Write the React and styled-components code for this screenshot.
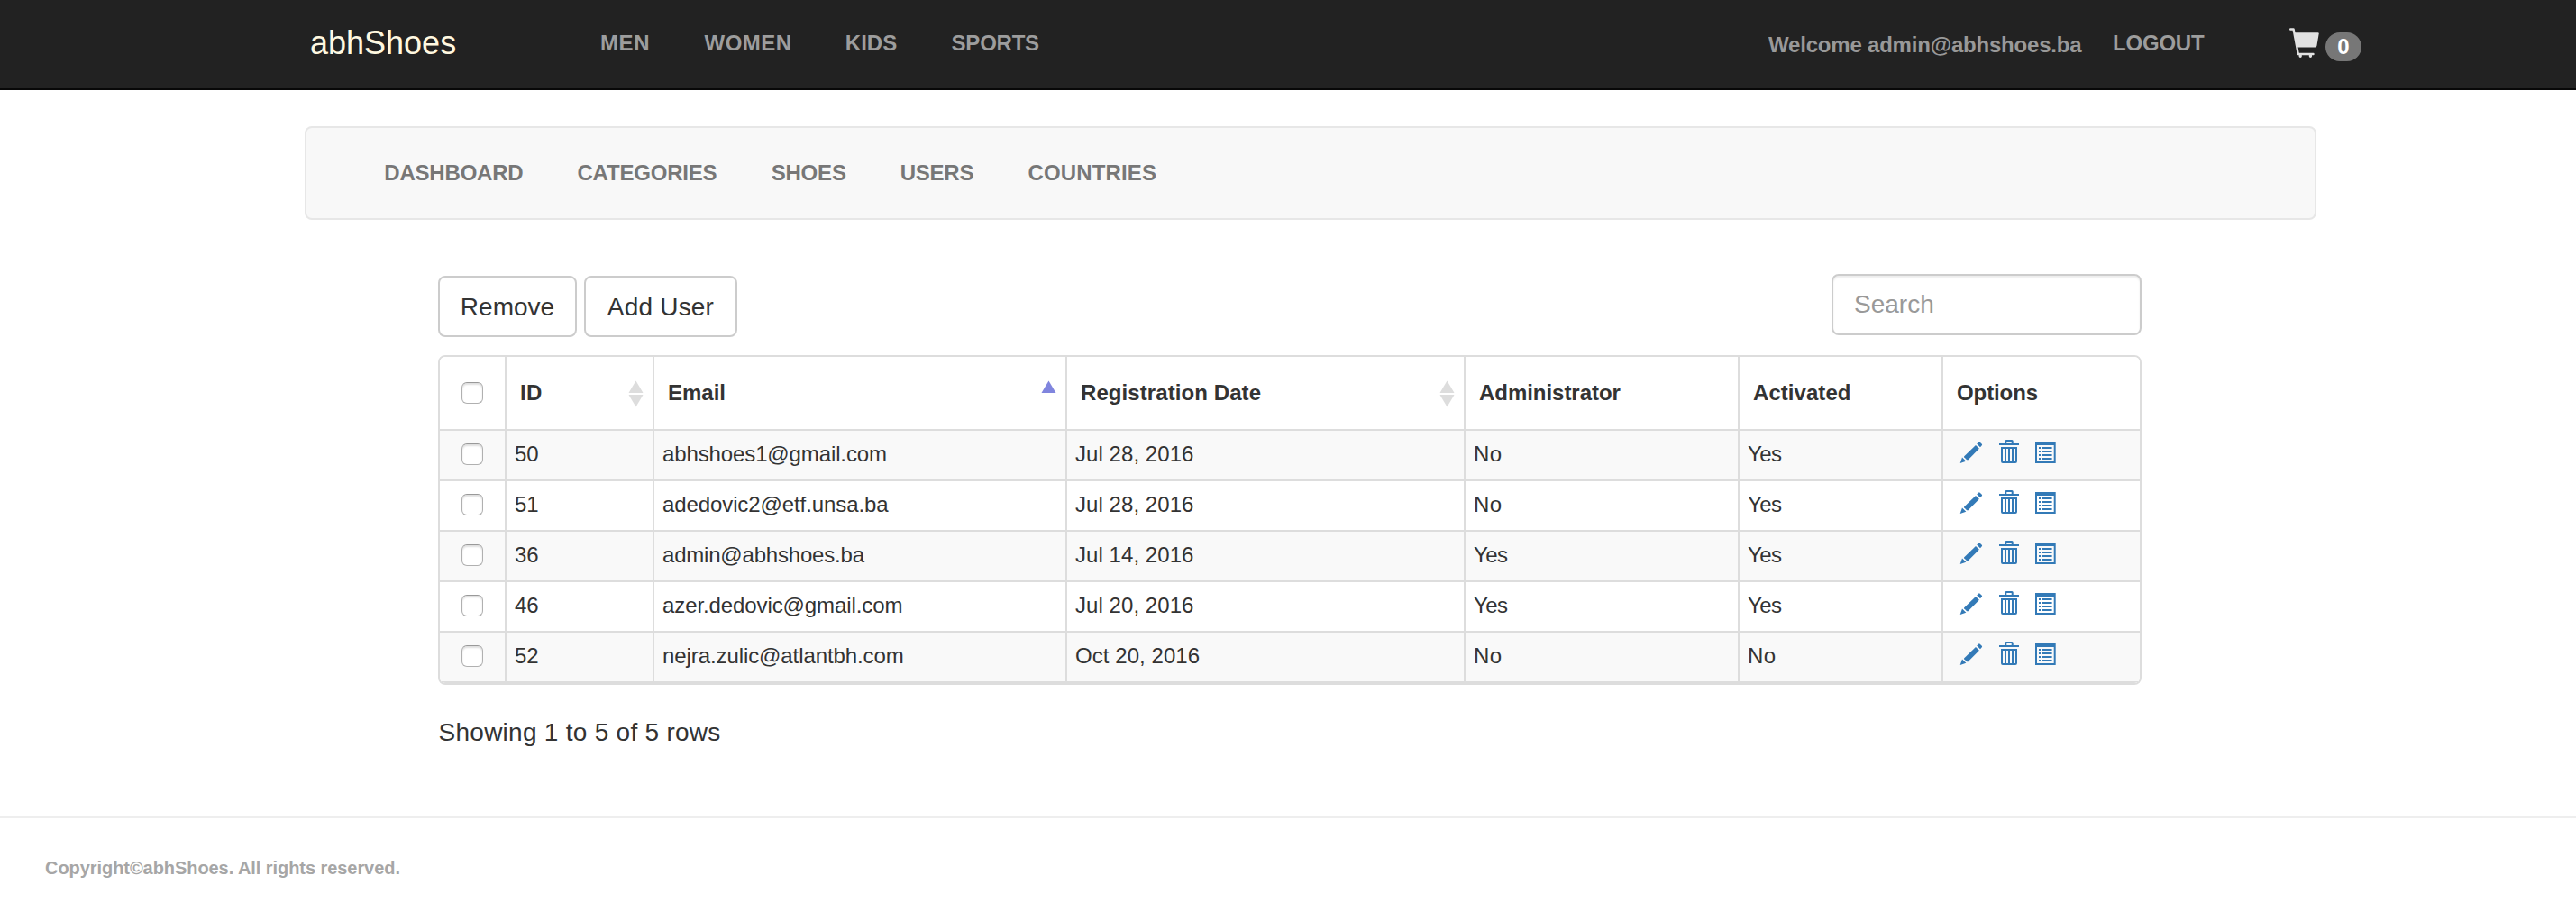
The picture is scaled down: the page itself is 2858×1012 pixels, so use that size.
import React from 'react';
import styled, { createGlobalStyle } from 'styled-components';

const GlobalStyle = createGlobalStyle`
  *, *::before, *::after { box-sizing: border-box; }
  body {
    margin: 0;
    background: #fff;
    color: #333;
    font-family: "Liberation Sans", Arial, sans-serif;
    font-size: 28px;
    line-height: 31px;
  }
`;

const Page = styled.div`
  display: flex;
  flex-direction: column;
  min-height: 1012px;
`;

const Header = styled.header`
  display: flex;
  align-items: flex-start;
  height: 100px;
  padding-left: 344px;
  background: #222;
  border-bottom: 2px solid #080808;
`;

const Brand = styled.a`
  width: 322px;
  padding-top: 27px;
  font-size: 36px;
  line-height: 41px;
  color: #fff8e0;
`;

const Nav = styled.nav`
  display: flex;
  padding-top: ${(p) => p.$top}px;
  padding-left: ${(p) => p.$left || 0}px;
`;

const NavLink = styled.a`
  width: ${(p) => p.$w}px;
  font-size: 24px;
  line-height: 27px;
  font-weight: bold;
  letter-spacing: ${(p) => p.$ls || 0}px;
  white-space: nowrap;
  color: ${(p) => (p.$dark ? '#9d9d9d' : '#777')};
`;

const Account = styled.div`
  display: flex;
  align-items: flex-start;
  margin-left: auto;
  width: 896px;
`;

const Welcome = styled.span`
  width: 382px;
  padding-top: 36px;
  font-size: 24px;
  line-height: 27px;
  font-weight: bold;
  letter-spacing: -0.2px;
  white-space: nowrap;
  color: #999;
`;

const Logout = styled(NavLink)`
  padding-top: 34px;
`;

const Cart = styled.a`
  display: flex;
  align-items: flex-start;
  gap: 6px;
  padding-top: 31px;
`;

const Badge = styled.span`
  width: 40px;
  height: 32px;
  margin-top: 5px;
  padding-top: 2px;
  border-radius: 20px;
  background: #777;
  color: #fff;
  font-size: 24px;
  line-height: 27px;
  font-weight: bold;
  text-align: center;
`;

const AdminBar = styled.div`
  width: 2232px;
  height: 104px;
  margin: 40px 0 0 338px;
  background: #f8f8f8;
  border: 2px solid #e7e7e7;
  border-radius: 8px;
`;

const Main = styled.main`
  width: 1890px;
  margin: 60px 0 0 486px;
`;

const Toolbar = styled.div`
  display: flex;
  align-items: flex-start;
  gap: 8px;
  height: 90px;
`;

const Button = styled.button`
  width: ${(p) => p.$w}px;
  height: 68px;
  margin: 2px 0 0;
  padding: 0;
  border: 2px solid #ccc;
  border-radius: 8px;
  background: #fff;
  color: #333;
  font: inherit;
  letter-spacing: ${(p) => p.$ls || 0}px;
`;

const Search = styled.input`
  width: 344px;
  height: 68px;
  margin-left: auto;
  padding: 0 22px 0 23px;
  border: 2px solid #ccc;
  border-radius: 8px;
  background: #fff;
  box-shadow: inset 0 2px 2px rgba(0, 0, 0, 0.075);
  font: inherit;
  color: #555;
  &::placeholder { color: #999; opacity: 1; }
`;

const Table = styled.div`
  border: 2px solid #ddd;
  border-radius: 8px;
  overflow: hidden;
`;

const Row = styled.div`
  display: grid;
  grid-template-columns: 74px 164px 458px 442px 304px 226px 218px;
  height: ${(p) => (p.$head ? 82 : 56)}px;
  border-bottom: 2px solid #ddd;
  background: ${(p) => (p.$striped ? '#f9f9f9' : '#fff')};
  font-size: 24px;
  line-height: 27px;
`;

const Cell = styled.div`
  padding: 12px 0 0 9px;
  border-right: 2px solid #ddd;
  letter-spacing: ${(p) => p.$ls || 0}px;
  white-space: nowrap;
  &:last-child { border-right: 0; }
`;

const HeadCell = styled(Cell)`
  display: flex;
  justify-content: space-between;
  align-items: flex-start;
  padding: 26px 10.5px 0 15px;
  font-weight: bold;
`;

const CheckCell = styled(Cell)`
  padding: ${(p) => (p.$head ? 28 : 14)}px 0 0 24px;
`;

const Checkbox = styled.input.attrs({ type: 'checkbox' })`
  appearance: none;
  display: block;
  width: 24px;
  height: 24px;
  margin: 0;
  border: 1.5px solid #b0b0b0;
  border-top-color: #999;
  border-radius: 6px;
  background: #fff;
  box-shadow: inset 0 2px 2px rgba(0, 0, 0, 0.13);
`;

const Actions = styled(Cell)`
  display: flex;
  align-items: flex-start;
  padding: 10px 0 0 18px;
  color: #337ab7;
`;

const ActionLink = styled.a`
  display: block;
  height: 26px;
  margin-right: ${(p) => p.$gap || 0}px;
  padding-top: ${(p) => p.$drop || 0}px;
  svg { display: block; }
`;

const Summary = styled.div`
  margin-top: 37px;
  padding-left: 0.5px;
  letter-spacing: 0.27px;
`;

const Footer = styled.footer`
  margin-top: 78px;
  padding: 44px 0 0 50px;
  border-top: 2px solid #eee;
  font-size: 20px;
  line-height: 22px;
  font-weight: bold;
  letter-spacing: -0.06px;
  color: #a6a6a6;
`;

const CartIcon = () => (
  <svg width="34" height="34" viewBox="0 0 34 34" fill="none">
    <path d="M1.2 1.5H4.6L9.8 29H26.5" stroke="#e2e2e2" strokeWidth="2.4" strokeLinecap="round" strokeLinejoin="round" />
    <path d="M5.6 5.2H31.6Q32.9 5.2 32.7 6.5L30.4 20Q30 21.6 28.4 21.6H9.2Z" fill="#e2e2e2" />
    <path d="M10.6 29h3.2v2.6q0 1.3-1.6 1.3t-1.6-1.3zM21.8 29h3.2v2.6q0 1.3-1.6 1.3t-1.6-1.3z" fill="#e2e2e2" />
  </svg>
);

const PencilIcon = () => (
  <svg width="26" height="24" viewBox="0 0 26 24" fill="currentColor">
    <path d="M19.2 2.6 21.1.7Q21.9 0 22.7.7L24.8 2.8Q25.5 3.5 24.8 4.2L23 6.2Z" />
    <path d="M18 4 21.9 7.7 9.2 20.6 7.8 20 5.2 17.2 5 16.4Z" />
    <path d="M3 17.6 7.3 21.7.7 24Z" />
  </svg>
);

const TrashIcon = () => (
  <svg width="22" height="26" viewBox="0 0 22 26" fill="currentColor">
    <path fillRule="evenodd" d="M6.3 4V1.6Q6.3 0 7.9 0H14.1Q15.7 0 15.7 1.6V4H22V6H0V4ZM8.3 4H13.7V2H8.3Z" />
    <path fillRule="evenodd" d="M2 8H20V24Q20 26 18 26H4Q2 26 2 24ZM4 10V24H6V10ZM8 10V24H10V10ZM12 10V24H14V10ZM16 10V24H18V10Z" />
  </svg>
);

const ListIcon = () => (
  <svg width="23" height="24" viewBox="0 0 23 24" fill="currentColor">
    <path fillRule="evenodd" d="M0 0H22.7V24H0ZM2 4V22H20.7V4Z" />
    <path d="M4 6h2v2H4zM4 10h2v2H4zM4 14h2v2H4zM4 18h2v2H4zM8 6h10.6v2H8zM8 10h10.6v2H8zM8 14h10.6v2H8zM8 18h10.6v2H8z" />
  </svg>
);

const SortIcon = ({ active }) => (
  <svg width="17" height="30" viewBox="0 0 17 30">
    <path d="M8.5 0.5 16.5 14H0.5Z" fill={active ? '#8085de' : '#ddd'} />
    {!active && <path d="M0.5 16H16.5L8.5 29.5Z" fill="#ddd" />}
  </svg>
);

const shopLinks = [
  { label: 'MEN', w: 115.5, ls: 0.6 },
  { label: 'WOMEN', w: 156.3, ls: 0.5 },
  { label: 'KIDS', w: 117.8, ls: 0 },
  { label: 'SPORTS', w: 110, ls: -0.24 },
];

const adminLinks = [
  { label: 'DASHBOARD', w: 214.2, ls: -0.2 },
  { label: 'CATEGORIES', w: 215.2, ls: -0.2 },
  { label: 'SHOES', w: 143.1, ls: -0.2 },
  { label: 'USERS', w: 141.8, ls: -0.25 },
  { label: 'COUNTRIES', w: 150, ls: 0.13 },
];

const columns = [
  { label: 'ID', sort: 'both', ls: 0.4 },
  { label: 'Email', sort: 'asc', ls: 0 },
  { label: 'Registration Date', sort: 'both', ls: 0.08 },
  { label: 'Administrator', ls: -0.04 },
  { label: 'Activated', ls: 0.05 },
  { label: 'Options', ls: -0.1 },
];

const users = [
  { id: 50, email: 'abhshoes1@gmail.com', ls: -0.12, date: 'Jul 28, 2016', admin: 'No', active: 'Yes' },
  { id: 51, email: 'adedovic2@etf.unsa.ba', ls: -0.1, date: 'Jul 28, 2016', admin: 'No', active: 'Yes' },
  { id: 36, email: 'admin@abhshoes.ba', ls: -0.2, date: 'Jul 14, 2016', admin: 'Yes', active: 'Yes' },
  { id: 46, email: 'azer.dedovic@gmail.com', ls: -0.1, date: 'Jul 20, 2016', admin: 'Yes', active: 'Yes' },
  { id: 52, email: 'nejra.zulic@atlantbh.com', ls: -0.09, date: 'Oct 20, 2016', admin: 'No', active: 'No' },
];

const yesNoSpacing = (value) => (value === 'Yes' ? -0.6 : 0.3);

export default function App() {
  return (
    <Page>
      <GlobalStyle />
      <Header>
        <Brand>abhShoes</Brand>
        <Nav $top={34}>
          {shopLinks.map((l) => (
            <NavLink key={l.label} $dark $w={l.w} $ls={l.ls}>{l.label}</NavLink>
          ))}
        </Nav>
        <Account>
          <Welcome>Welcome admin@abhshoes.ba</Welcome>
          <Logout $dark $w={196} $ls={-0.2}>LOGOUT</Logout>
          <Cart>
            <CartIcon />
            <Badge>0</Badge>
          </Cart>
        </Account>
      </Header>

      <AdminBar>
        <Nav $top={36} $left={86.3}>
          {adminLinks.map((l) => (
            <NavLink key={l.label} $w={l.w} $ls={l.ls}>{l.label}</NavLink>
          ))}
        </Nav>
      </AdminBar>

      <Main>
        <Toolbar>
          <Button $w={154}>Remove</Button>
          <Button $w={170} $ls={0.2}>Add User</Button>
          <Search placeholder="Search" />
        </Toolbar>
        <Table>
          <Row $head>
            <CheckCell $head><Checkbox /></CheckCell>
            {columns.map((c) => (
              <HeadCell key={c.label} $ls={c.ls}>
                {c.label}
                {c.sort && <SortIcon active={c.sort === 'asc'} />}
              </HeadCell>
            ))}
          </Row>
          {users.map((u, i) => (
            <Row key={u.id} $striped={i % 2 === 0}>
              <CheckCell><Checkbox /></CheckCell>
              <Cell>{u.id}</Cell>
              <Cell $ls={u.ls}>{u.email}</Cell>
              <Cell $ls={0.06}>{u.date}</Cell>
              <Cell $ls={yesNoSpacing(u.admin)}>{u.admin}</Cell>
              <Cell $ls={yesNoSpacing(u.active)}>{u.active}</Cell>
              <Actions>
                <ActionLink $gap={18} $drop={2}><PencilIcon /></ActionLink>
                <ActionLink $gap={18}><TrashIcon /></ActionLink>
                <ActionLink $drop={2}><ListIcon /></ActionLink>
              </Actions>
            </Row>
          ))}
        </Table>
        <Summary>Showing 1 to 5 of 5 rows</Summary>
      </Main>

      <Footer>Copyright©abhShoes. All rights reserved.</Footer>
    </Page>
  );
}
